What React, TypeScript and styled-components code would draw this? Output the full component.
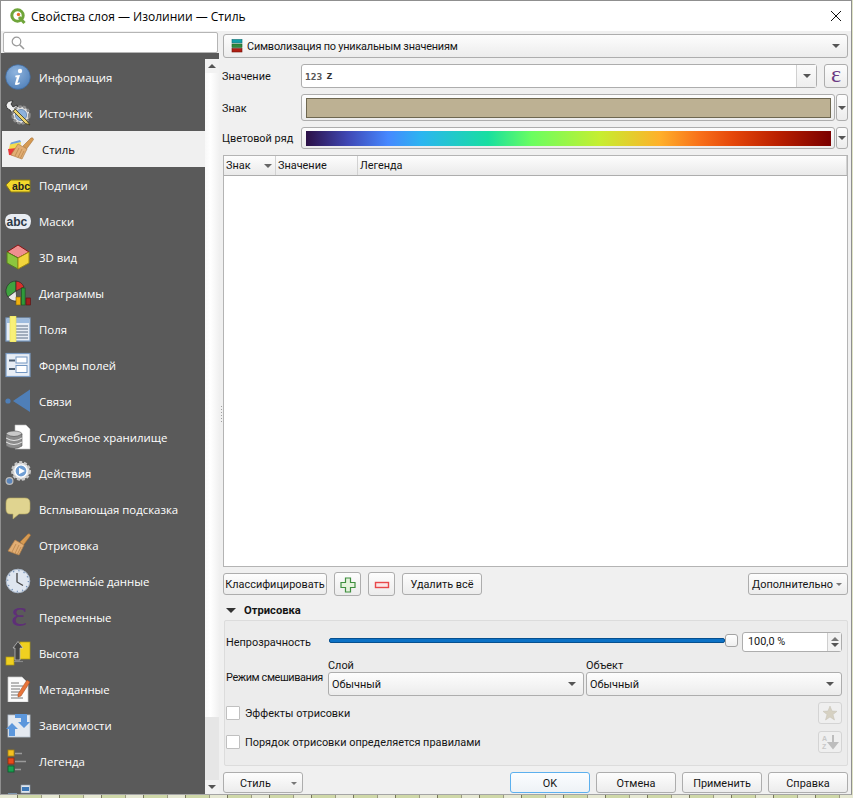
import React from "react";
import styled, { createGlobalStyle } from "styled-components";

const Global = createGlobalStyle`
  html, body { margin: 0; padding: 0; overflow: hidden; background: #e4e8cf; }
  body { font-family: "Open Sans", "Noto Sans", sans-serif; font-size: 11.4px; color: #111; }
  * { box-sizing: border-box; }
`;

const Page = styled.div`
  width: 853px; height: 798px; display: flex; flex-direction: column; overflow: hidden;
  background: #dfe3c6;
`;
const Win = styled.div`
  width: 852px; height: 795px; flex: none; display: flex; flex-direction: column;
  background: #f0f0f0; border: 1px solid #8f8f8f; border-bottom-color: #a5a5a5; overflow: hidden;
`;
const MapStrip = styled.div`
  height: 3px; flex: none;
  background: repeating-linear-gradient(90deg, #e6e8d2 0 17px, #77775c 17px 18px, #cfd8a8 18px 41px, #9a9a80 41px 42px);
`;
const TitleBar = styled.div`
  height: 30px; flex: none; background: #fff; display: flex; align-items: center; padding: 0 10px 0 9px;
`;
const TitleText = styled.div`
  margin-left: 5px; font-size: 12px; color: #000; flex: 1; white-space: nowrap;
`;
const Body = styled.div`
  flex: 1; min-height: 0; display: flex;
`;
const Sidebar = styled.div`
  width: 218px; flex: none; display: flex; flex-direction: column; background: #5a5a5a; min-height: 0;
`;
const SearchWrap = styled.div`
  height: 22px; flex: none; padding: 1px 1px 0 2px; background: #f0f0f0;
`;
const SearchField = styled.div`
  height: 21px; background: #fff; border: 1px solid #b5b5b5; border-radius: 2px; display: flex; align-items: center; padding-left: 7px;
`;
const NavWrap = styled.div`
  flex: 1; min-height: 0; display: flex; padding-top: 6px;
`;
const NavList = styled.div`
  width: 204px; flex: none; overflow: hidden; padding-left: 1px;
`;
const NavItem = styled.div<{ $active?: boolean }>`
  height: 36px; display: flex; align-items: center; white-space: nowrap;
  padding-left: ${p => (p.$active ? 6 : 3)}px;
  background: ${p => (p.$active ? "#f0f0f0" : "transparent")};
  color: ${p => (p.$active ? "#111" : "#fff")};
`;
const NavIcon = styled.span`
  width: 26px; height: 26px; flex: none; display: block; margin-right: 8px;
  svg { display: block; }
`;
const NavEpsilon = styled.span`
  display: block; width: 26px; height: 26px; padding-left: 6px; margin-top: -4px;
  font-family: "Liberation Serif", serif; font-size: 38px; line-height: 26px; color: #5e2f77;
`;
const Scroll = styled.div`
  width: 14px; flex: none; display: flex; flex-direction: column; background: #e6e6e6;
`;
const ScrollBtn = styled.div`
  height: 14px; flex: none; background: #f2f2f2; display: flex; align-items: center; justify-content: center;
`;
const Thumb = styled.div`
  height: 644px; flex: none; background: linear-gradient(90deg, #f8f8f8, #ffffff 40%, #f1f1f1);
`;
const ScrollRest = styled.div`
  flex: 1;
`;
const Splitter = styled.div`
  width: 4px; flex: none; display: flex; align-items: center; background: #f0f0f0; padding: 0 1px 0 2px;
`;
const Grip = styled.div`
  width: 1px; height: 17px; margin-top: 3px;
  background: repeating-linear-gradient(180deg, #a0a0a0 0 1px, transparent 1px 3px);
`;
const Main = styled.div`
  width: 625px; flex: none; display: flex; flex-direction: column; padding-top: 3px; min-height: 0;
  font-family: Roboto, "Open Sans", sans-serif; font-size: 10.9px; color: #151515;
`;
const raised = `
  border: 1px solid #adadad; border-radius: 3px;
  background: linear-gradient(180deg, #fdfdfd, #ececec);
`;
const Combo = styled.div<{ $pl?: number }>`
  ${raised}
  height: 24px; flex: ${p => (p.$pl ? "none" : 1)}; min-width: 0; display: flex; align-items: center;
  padding: 0 7px 0 ${p => p.$pl ?? 3}px; white-space: nowrap;
`;
const ComboText = styled.span<{ $tight?: boolean }>`
  flex: 1; padding-top: 1px;
  ${p => (p.$tight ? "letter-spacing: -0.2px;" : "")}
`;
const TypeIcon = styled.svg`
  flex: none; margin-right: 4px;
`;
const Arrow = styled.span<{ $up?: boolean; $color?: string; $w?: number }>`
  width: 0; height: 0; flex: none; display: block;
  border-left: ${p => p.$w ?? 4}px solid transparent;
  border-right: ${p => p.$w ?? 4}px solid transparent;
  ${p => (p.$up ? "border-bottom" : "border-top")}: ${p => p.$w ?? 4}px solid ${p => p.$color ?? "#555"};
`;
const FormRow = styled.div<{ $h: number }>`
  display: flex; align-items: center; height: ${p => p.$h}px; margin-top: 6px; flex: none;
`;
const RowLabel = styled.div`
  width: 79px; margin-left: -1px; flex: none; white-space: nowrap; padding-top: 1px;
`;
const FieldCombo = styled.div`
  flex: 1; height: 24px; display: flex; background: #fff; border: 1px solid #adadad; border-radius: 3px; min-width: 0;
`;
const FieldValue = styled.div`
  flex: 1; display: flex; align-items: center; padding-left: 3px; gap: 4px;
`;
const TypeBadge = styled.span`
  font-family: "DejaVu Sans Mono", monospace; font-size: 9.5px; font-weight: 700; color: #555;
`;
const FieldName = styled.span`
  font-family: "Liberation Mono", monospace; font-size: 11px; font-weight: 700; color: #333;
`;
const FieldDrop = styled.div`
  width: 20px; flex: none; border-left: 1px solid #d0d0d0; display: flex; align-items: center; justify-content: center;
  background: linear-gradient(180deg, #fbfbfb, #eeeeee);
`;
const ExprBtn = styled.div`
  ${raised}
  width: 24px; height: 24px; margin-left: 7px; flex: none; display: flex; align-items: center; justify-content: center;
`;
const SymbolBtn = styled.div`
  ${raised}
  width: 534px; height: 100%; flex: none; padding: 3px 3px 2px 4px;
`;
const Swatch = styled.div<{ $ramp?: boolean }>`
  height: 100%;
  ${p =>
    p.$ramp
      ? `background: linear-gradient(90deg, #2c1046 0%, #3f48b5 8%, #4688ff 15.6%, #2bb5f0 22%, #18dfa0 34.7%, #6afe60 43%, #c6ee30 56%, #ffb02a 67.4%, #f8701a 75%, #e5470a 81.3%, #bb2000 89.7%, #7a0000 100%);`
      : `background: #bdb193; border: 1px solid #6e6750;`}
`;
const SideDrop = styled.div`
  ${raised}
  width: 12px; height: 100%; margin-left: 1px; flex: none; display: flex; align-items: center; justify-content: center;
`;
const Table = styled.div`
  height: 412px; margin-top: 6px; flex: none; display: flex; flex-direction: column; background: #fff; border: 1px solid #b4b4b4;
`;
const THead = styled.div`
  height: 20px; flex: none; display: flex; border-bottom: 1px solid #adadad; background: linear-gradient(180deg, #fdfdfd, #eaeaea);
`;
const TH = styled.div<{ $w?: number }>`
  width: ${p => (p.$w ? `${p.$w}px` : "auto")}; flex: ${p => (p.$w ? "none" : 1)}; display: flex; align-items: center;
  padding: 0 3px 0 2px; border-right: 1px solid #d2d2d2; justify-content: space-between;
`;
const Actions = styled.div`
  height: 24px; margin-top: 5px; flex: none; display: flex; align-items: center; gap: 7px;
`;
const Btn = styled.div<{ $w: number; $h?: number; $ok?: boolean }>`
  ${raised}
  width: ${p => p.$w}px; height: ${p => p.$h ?? 22}px; flex: none; display: flex; align-items: center; justify-content: center; white-space: nowrap;
  padding-top: 1px;
  ${p => (p.$ok ? "border-color: #5cb0ee; background: linear-gradient(180deg, #fbfdff, #eef2f6);" : "")}
`;
const MoreBtn = styled(Btn)`
  margin-left: auto; justify-content: space-between; padding: 1px 5px 0 3px;
`;
const SectionHead = styled.div`
  height: 15px; margin-top: 7px; flex: none; display: flex; align-items: center; padding-left: 3px; font-weight: 700; font-size: 11.2px;
`;
const SectionTitle = styled.span`
  margin-left: 8px;
`;
const Group = styled.div`
  height: 146px; margin: 2px 0 0 1px; flex: none; background: #ececec; border: 1px solid #dcdcdc; border-radius: 2px;
  padding: 11px 5px 0 1px; display: flex; flex-direction: column;
`;
const OpacityRow = styled.div`
  height: 19px; flex: none; display: flex; align-items: center;
`;
const OpacityLabel = styled.div`
  width: 103px; flex: none; padding-top: 1px;
`;
const Track = styled.div`
  width: 396px; height: 5px; flex: none; margin-top: -3px; background: #0c72c6; border: 1px solid #07508f; border-radius: 2px;
`;
const Handle = styled.div`
  width: 13px; height: 13px; flex: none; margin-top: -3px; background: linear-gradient(180deg, #ffffff, #efefef); border: 1px solid #a3a3a3; border-radius: 3px;
`;
const Spin = styled.div`
  width: 100px; height: 20px; margin-left: 4px; flex: none; display: flex; background: #fff; border: 1px solid #adadad; border-radius: 3px;
`;
const SpinValue = styled.div`
  flex: 1; display: flex; align-items: center; padding-left: 5px;
`;
const SpinBtns = styled.div`
  width: 14px; flex: none; border-left: 1px solid #cfcfcf; display: flex; flex-direction: column; align-items: center; justify-content: center; gap: 2px; background: #f2f2f2;
`;
const BlendRow = styled.div`
  height: 37px; margin-top: 8px; flex: none; display: flex; gap: 2px;
`;
const BlendLabel = styled.div`
  width: 100px; flex: none; padding-top: 12px; white-space: nowrap; letter-spacing: -0.4px;
`;
const BlendCol = styled.div`
  width: 256px; flex: none; display: flex; flex-direction: column;
`;
const BlendCaption = styled.div`
  height: 13px; line-height: 13px; flex: none;
`;
const CheckRow = styled.div<{ $first?: boolean }>`
  height: 22px; margin-top: ${p => (p.$first ? 6 : 7)}px; flex: none; display: flex; align-items: center;
`;
const CheckBox = styled.div`
  width: 14px; height: 14px; flex: none; background: #fff; border: 1px solid #c0c0c0; border-radius: 1px;
`;
const CheckText = styled.span`
  margin-left: 5px; flex: 1; padding-top: 1px;
`;
const ToolBtn = styled.div`
  width: 24px; height: 22px; flex: none; border: 1px solid #d4d4d4; border-radius: 3px; background: #efefef; display: flex; align-items: center; justify-content: center;
`;
const Footer = styled.div`
  height: 21px; margin-top: 6px; flex: none; display: flex; gap: 6px;
`;
const StyleBtn = styled(Btn)`
  margin-right: auto; padding: 1px 5px 0 16px; justify-content: space-between;
`;
const Epsilon = styled.span`
  font-family: "Liberation Serif", serif; font-size: 24px; line-height: 20px; color: #6b3a84; margin-top: -4px;
`;

const S = ({ children }: { children: React.ReactNode }) => (
  <svg width="26" height="26" viewBox="0 0 26 26">{children}</svg>
);

const Brush = () => (
  <>
    <path d="M15 10 L23 2 Q25 1 25.5 3.5 L18.5 13Z" fill="#d69a52" stroke="#a87238" strokeWidth=".6" />
    <path d="M10 8 L19 13 L14 23 L3 19Z" fill="#e2ae74" stroke="#b58148" strokeWidth=".7" />
    <path d="M11 12 L7 20 M14 13 L10 21.5 M16 15 L12.5 22" stroke="#b58148" strokeWidth=".7" />
  </>
);

const icons: Record<string, React.ReactNode> = {
  info: (
    <S>
      <defs>
        <radialGradient id="ig" cx=".4" cy=".3" r=".8"><stop offset="0" stopColor="#8fb4de" /><stop offset="1" stopColor="#4f7fb8" /></radialGradient>
      </defs>
      <circle cx="13" cy="13" r="12.3" fill="url(#ig)" stroke="#3d6aa0" strokeWidth=".7" />
      <circle cx="15" cy="7" r="2.2" fill="#fff" />
      <path d="M10.5 11.5 L15 11 L12.5 19 L14.8 18.2 L14.5 20 Q11 21.5 9.8 20.5 L11.8 13.2 L10.2 13.2Z" fill="#fff" />
    </S>
  ),
  source: (
    <S>
      <path d="M1 5 Q3 0 8 1 L6 4 L8 7 L12 5 Q13 10 8 11 L13 16 L10 17 L5 10Q1 9 1 5Z" fill="#f0f0f0" stroke="#222" strokeWidth=".8" />
      <circle cx="16" cy="15" r="8.4" fill="#e2e2e2" stroke="#8c8c8c" strokeWidth="2.6" strokeDasharray="3 1.6" />
      <circle cx="16" cy="15" r="5.6" fill="#8db2dc" stroke="#5579a6" strokeWidth=".7" />
      <path d="M10 9 L22 21 L25 25 L20.5 23.5 L8.5 11.5Z" fill="#ecd36d" stroke="#3c3820" strokeWidth=".8" />
    </S>
  ),
  style: (
    <S>
      <path d="M2 8 L13 6 L12 13 L1 13Z" fill="#f2dc4e" />
      <path d="M3 6.5 L12 4 L13 6 L2 8.5Z" fill="#6f9fd8" />
      <path d="M0 13 L9 12 L11 20 L1 19Z" fill="#e8383a" />
      <Brush />
    </S>
  ),
  labels: (
    <S>
      <path d="M1 13 L6 8 H25 V20 H6 Z" fill="#f3d92c" stroke="#8c7a10" strokeWidth="1" />
      <text x="7" y="18" fontFamily="Liberation Sans, sans-serif" fontSize="10.5" fontWeight="700" fill="#222">abc</text>
    </S>
  ),
  masks: (
    <S>
      <path d="M6 6 H20 Q26 7 26 13 Q26 20 20 21 H6 Q0 20 0 13 Q0 7 6 6Z" fill="#e8ecf2" />
      <text x="1.5" y="18" fontFamily="Liberation Sans, sans-serif" fontSize="12" fontWeight="700" fill="#2c3846">abc</text>
    </S>
  ),
  d3: (
    <S>
      <path d="M13 1 L24 8 L13 14 L2 8Z" fill="#f08f8f" stroke="#8a1414" strokeWidth="1" />
      <path d="M2 8 L13 14 V25 L2 19Z" fill="#8cc63e" stroke="#55801c" strokeWidth="1" />
      <path d="M24 8 L13 14 V25 L24 19Z" fill="#f2d53c" stroke="#9d8a14" strokeWidth="1" />
    </S>
  ),
  charts: (
    <S>
      <path d="M11 11 L11 1 A10 10 0 0 0 3 17Z" fill="#3fa33f" stroke="#222" strokeWidth=".6" />
      <path d="M11 11 L11 1 A10 10 0 0 1 19 7Z" fill="#d8312c" stroke="#222" strokeWidth=".6" />
      <path d="M11 11 L3 17 A10 10 0 0 0 12 21Z" fill="#e8e8e8" stroke="#222" strokeWidth=".6" />
      <rect x="11" y="17" width="4.5" height="8" fill="#f0b010" stroke="#7a6208" strokeWidth=".6" />
      <rect x="16.5" y="8" width="3.6" height="17" fill="#2f9a3a" stroke="#14521a" strokeWidth=".6" />
      <rect x="21" y="18" width="4.5" height="7" fill="#a02020" stroke="#551010" strokeWidth=".6" />
    </S>
  ),
  fields: (
    <S>
      <rect x="1" y="2" width="24" height="23" fill="#e7edf5" stroke="#7b9cc4" strokeWidth="1.2" />
      <rect x="2" y="3" width="22" height="4" fill="#9dbbdf" />
      <path d="M11 10 H23 M11 13 H23 M11 16 H23 M11 19 H23 M11 22 H23" stroke="#5d6f86" strokeWidth="1" />
      <rect x="5" y="0" width="6" height="26" fill="#f8f078" stroke="#e6dd50" strokeWidth=".6" />
    </S>
  ),
  forms: (
    <S>
      <rect x="1" y="1.5" width="24" height="23" fill="#e7edf5" stroke="#7b9cc4" strokeWidth="1.2" />
      <rect x="4" y="7.5" width="6" height="2" fill="#4a5c70" />
      <rect x="4" y="16" width="6" height="2" fill="#4a5c70" />
      <rect x="11" y="5" width="11" height="6" fill="#fff" stroke="#7396c1" />
      <rect x="11" y="13.5" width="11" height="7" fill="#fff" stroke="#7396c1" />
    </S>
  ),
  relations: (
    <S>
      <path d="M25 1.5 V24 L8 13Z" fill="#4f7fb8" />
      <circle cx="3" cy="13" r="2.6" fill="#4f7fb8" />
    </S>
  ),
  storage: (
    <S>
      <path d="M10 1 H21 L25 5 V25 H10Z" fill="#fff" stroke="#bbb" strokeWidth=".6" />
      <ellipse cx="9" cy="10" rx="8" ry="3" fill="#c9c9c9" stroke="#555" strokeWidth=".6" />
      <path d="M1 10 V22 Q9 27 17 22 V10 Q9 15 1 10Z" fill="#8b8b8b" stroke="#555" strokeWidth=".6" />
      <path d="M1 14 Q9 19 17 14 M1 18 Q9 23 17 18" stroke="#e6e6e6" strokeWidth="1" fill="none" />
    </S>
  ),
  actions: (
    <S>
      <circle cx="16" cy="11" r="8.6" fill="#e4e4e4" stroke="#c8c8c8" strokeWidth="2.6" strokeDasharray="3 1.8" />
      <circle cx="16" cy="11" r="6" fill="#6f9ed4" stroke="#fff" strokeWidth="1.2" />
      <path d="M14 7.8 L20 11 L14 14.2Z" fill="#fff" />
      <circle cx="4.5" cy="21" r="3.4" fill="#5c86bb" stroke="#bbb" strokeWidth="1.2" />
    </S>
  ),
  tooltip: (
    <S>
      <path d="M5 2 H20 Q25 2 25 7 V13 Q25 18 20 18 H14 L8 23 V18 H5 Q1 18 1 13 V7 Q1 2 5 2Z" fill="#e0d490" stroke="#b5a860" strokeWidth=".6" />
    </S>
  ),
  render: <S><Brush /></S>,
  time: (
    <S>
      <circle cx="13" cy="13" r="11.8" fill="#dfe6f0" stroke="#a9b7c9" strokeWidth="1" />
      <circle cx="13" cy="13" r="10.3" fill="none" stroke="#6b8bb5" strokeWidth="1.2" strokeDasharray="1.2 4.2" />
      <path d="M12 5 V14 L18 17.5" stroke="#444" strokeWidth="1.3" fill="none" />
    </S>
  ),
  vars: <NavEpsilon>ε</NavEpsilon>,
  elevation: (
    <S>
      <rect x="15" y="2" width="10" height="17" fill="#f0d020" stroke="#b09a10" strokeWidth=".7" />
      <rect x="1" y="17" width="8" height="8" fill="#f0d020" stroke="#b09a10" strokeWidth=".7" />
      <path d="M8 8 L13 1.5 L18 8 H15 V20 H10 V8Z" fill="#444" stroke="#ddd" strokeWidth=".6" />
      <path d="M9 21.5 H18" stroke="#888" strokeWidth="1.2" />
    </S>
  ),
  metadata: (
    <S>
      <path d="M3 1 H17 L23 7 V26 H3Z" fill="#fbfbfb" stroke="#c8c8c8" strokeWidth=".7" />
      <path d="M6 7 H14 M6 10 H18 M6 13 H15 M6 16 H15 M6 19 H13 M6 22 H18" stroke="#777" strokeWidth="1" />
      <path d="M13 18 L22 4 L25 6 L16 20 L13 21Z" fill="#e8743a" stroke="#9b4518" strokeWidth=".5" />
    </S>
  ),
  deps: (
    <S>
      <rect x="3" y="3" width="22" height="22" fill="#e4e9f0" stroke="#b7c2cf" strokeWidth=".8" />
      <path d="M1 17 L7 11 L13 17 H10 V24 H4 V17Z" fill="#5c97dc" />
      <path d="M25 10 L19 16 L13 10 H16 V6 H10 V2 H22 V10Z" fill="#5c97dc" />
    </S>
  ),
  legend: (
    <S>
      <rect x="3" y="2" width="6" height="6" fill="#f4c020" stroke="#a88410" strokeWidth=".8" />
      <rect x="3" y="10" width="6" height="6" fill="#e84a1a" stroke="#8e2a0a" strokeWidth=".8" />
      <rect x="3" y="18" width="6" height="6" fill="#18a050" stroke="#0c5c2c" strokeWidth=".8" />
      <path d="M10 5.5 H17 M10 13.5 H21 M10 21.5 H16" stroke="#9a9a9a" strokeWidth="1.6" />
    </S>
  ),
  qgis: (
    <S>
      <rect x="16" y="1" width="9" height="8" fill="#dfe6ee" stroke="#8a98a8" strokeWidth=".6" />
      <rect x="17" y="3" width="7" height="4" fill="#3c78b8" />
      <rect x="3" y="9" width="9" height="6" fill="#7d95ad" />
    </S>
  ),
};

const items: [string, string, boolean?][] = [
  ["info", "Информация"],
  ["source", "Источник"],
  ["style", "Стиль", true],
  ["labels", "Подписи"],
  ["masks", "Маски"],
  ["d3", "3D вид"],
  ["charts", "Диаграммы"],
  ["fields", "Поля"],
  ["forms", "Формы полей"],
  ["relations", "Связи"],
  ["storage", "Служебное хранилище"],
  ["actions", "Действия"],
  ["tooltip", "Всплывающая подсказка"],
  ["render", "Отрисовка"],
  ["time", "Временны́е данные"],
  ["vars", "Переменные"],
  ["elevation", "Высота"],
  ["metadata", "Метаданные"],
  ["deps", "Зависимости"],
  ["legend", "Легенда"],
  ["qgis", "Среда QGIS"],
];

const QgisLogo = () => (
  <svg width="16" height="16" viewBox="0 0 16 16">
    <circle cx="7.5" cy="7.5" r="5.7" fill="#fff" stroke="#6fa53a" strokeWidth="3" />
    <path d="M9 9 L14.5 15" stroke="#6fa53a" strokeWidth="3" />
    <circle cx="8.5" cy="6.5" r="1.7" fill="#e8702a" />
  </svg>
);

export default function App() {
  return (
    <Page>
      <Global />
      <Win>
        <TitleBar>
          <QgisLogo />
          <TitleText>Свойства слоя — Изолинии — Стиль</TitleText>
          <svg width="10" height="10" viewBox="0 0 10 10">
            <path d="M0 0 L10 10 M10 0 L0 10" stroke="#111" strokeWidth="1" />
          </svg>
        </TitleBar>
        <Body>
          <Sidebar>
            <SearchWrap>
              <SearchField>
                <svg width="14" height="14" viewBox="0 0 14 14">
                  <circle cx="5.5" cy="5.5" r="4.3" fill="none" stroke="#9a9a9a" strokeWidth="1.2" />
                  <path d="M8.7 8.7 L13 13" stroke="#9a9a9a" strokeWidth="1.6" />
                </svg>
              </SearchField>
            </SearchWrap>
            <NavWrap>
              <NavList>
                {items.map(([icon, label, active]) => (
                  <NavItem key={icon} $active={active}>
                    <NavIcon>{icons[icon]}</NavIcon>
                    {label}
                  </NavItem>
                ))}
              </NavList>
              <Scroll>
                <ScrollBtn><Arrow $up /></ScrollBtn>
                <Thumb />
                <ScrollRest />
                <ScrollBtn><Arrow /></ScrollBtn>
              </Scroll>
            </NavWrap>
          </Sidebar>
          <Splitter><Grip /></Splitter>
          <Main>
            <Combo $pl={7}>
              <TypeIcon width="12" height="14" viewBox="0 0 12 14">
                <rect x="1" y="0.5" width="10" height="3.4" fill="#12a0a8" stroke="#0c6f74" strokeWidth=".6" />
                <rect x="1" y="5" width="10" height="3.4" fill="#2e8a3e" stroke="#1c5c28" strokeWidth=".6" />
                <rect x="1" y="9.6" width="10" height="3.4" fill="#b01e12" stroke="#701008" strokeWidth=".6" />
              </TypeIcon>
              <ComboText $tight>Символизация по уникальным значениям</ComboText>
              <Arrow />
            </Combo>
            <FormRow $h={24}>
              <RowLabel>Значение</RowLabel>
              <FieldCombo>
                <FieldValue><TypeBadge>123</TypeBadge><FieldName>z</FieldName></FieldValue>
                <FieldDrop><Arrow /></FieldDrop>
              </FieldCombo>
              <ExprBtn><Epsilon>ε</Epsilon></ExprBtn>
            </FormRow>
            <FormRow $h={27}>
              <RowLabel>Знак</RowLabel>
              <SymbolBtn><Swatch /></SymbolBtn>
              <SideDrop><Arrow /></SideDrop>
            </FormRow>
            <FormRow $h={22}>
              <RowLabel>Цветовой ряд</RowLabel>
              <SymbolBtn><Swatch $ramp /></SymbolBtn>
              <SideDrop><Arrow /></SideDrop>
            </FormRow>
            <Table>
              <THead>
                <TH $w={52}>Знак<Arrow $color="#666" /></TH>
                <TH $w={82}>Значение</TH>
                <TH>Легенда</TH>
              </THead>
            </Table>
            <Actions>
              <Btn $w={104}>Классифицировать</Btn>
              <Btn $w={27} $h={24}>
                <svg width="16" height="16" viewBox="0 0 16 16">
                  <path d="M5.5 1 H10.5 V5.5 H15 V10.5 H10.5 V15 H5.5 V10.5 H1 V5.5 H5.5Z" fill="#e4f2dc" stroke="#3f8f3f" strokeWidth="1.2" />
                </svg>
              </Btn>
              <Btn $w={27} $h={24}>
                <svg width="16" height="8" viewBox="0 0 16 8">
                  <rect x="1.5" y="1.5" width="13" height="5" fill="#fbe6e6" stroke="#e8484a" strokeWidth="1.4" />
                </svg>
              </Btn>
              <Btn $w={80}>Удалить всё</Btn>
              <MoreBtn $w={100}>Дополнительно<Arrow $w={3} $color="#777" /></MoreBtn>
            </Actions>
            <SectionHead>
              <Arrow $w={5} $color="#333" />
              <SectionTitle>Отрисовка</SectionTitle>
            </SectionHead>
            <Group>
              <OpacityRow>
                <OpacityLabel>Непрозрачность</OpacityLabel>
                <Track />
                <Handle />
                <Spin>
                  <SpinValue>100,0 %</SpinValue>
                  <SpinBtns><Arrow $up $color="#777" /><Arrow /></SpinBtns>
                </Spin>
              </OpacityRow>
              <BlendRow>
                <BlendLabel>Режим смешивания</BlendLabel>
                <BlendCol>
                  <BlendCaption>Слой</BlendCaption>
                  <Combo><ComboText>Обычный</ComboText><Arrow /></Combo>
                </BlendCol>
                <BlendCol>
                  <BlendCaption>Объект</BlendCaption>
                  <Combo><ComboText>Обычный</ComboText><Arrow /></Combo>
                </BlendCol>
              </BlendRow>
              <CheckRow $first>
                <CheckBox />
                <CheckText>Эффекты отрисовки</CheckText>
                <ToolBtn>
                  <svg width="16" height="16" viewBox="0 0 16 16">
                    <path d="M8 1 L10 6 L15 6.3 L11 9.5 L12.5 15 L8 12 L3.5 15 L5 9.5 L1 6.3 L6 6Z" fill="#d6d1c2" stroke="#c4c0b4" strokeWidth=".5" />
                  </svg>
                </ToolBtn>
              </CheckRow>
              <CheckRow>
                <CheckBox />
                <CheckText>Порядок отрисовки определяется правилами</CheckText>
                <ToolBtn>
                  <svg width="18" height="16" viewBox="0 0 18 16">
                    <text x="1" y="7" fontFamily="Liberation Sans, sans-serif" fontSize="7" fontWeight="700" fill="#c8c8c8">A</text>
                    <text x="1" y="15" fontFamily="Liberation Sans, sans-serif" fontSize="7" fontWeight="700" fill="#c8c8c8">Z</text>
                    <path d="M12 1 V10 M8 9 L12 14 L16 9Z" stroke="#bdbdbd" strokeWidth="2" fill="#bdbdbd" />
                  </svg>
                </ToolBtn>
              </CheckRow>
            </Group>
            <Footer>
              <StyleBtn $w={80} $h={21}>Стиль<Arrow $w={3} $color="#777" /></StyleBtn>
              <Btn $w={80} $h={21} $ok>OK</Btn>
              <Btn $w={80} $h={21}>Отмена</Btn>
              <Btn $w={80} $h={21}>Применить</Btn>
              <Btn $w={80} $h={21}>Справка</Btn>
            </Footer>
          </Main>
        </Body>
      </Win>
      <MapStrip />
    </Page>
  );
}
